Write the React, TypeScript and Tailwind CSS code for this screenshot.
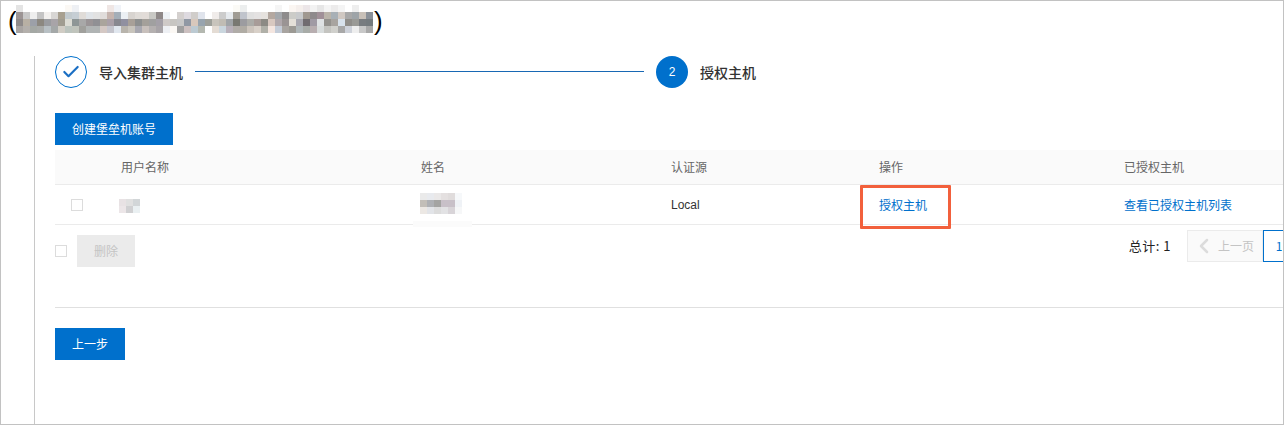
import { Check, ChevronLeft } from "lucide-react";

const FONT = "font-['Microsoft_YaHei','Noto_Sans_CJK_SC','Liberation_Sans',sans-serif]";

// mosaic cells of the blurred title, one string per row, w = white
const TITLE_ROWS = [
  "e4e4e4 w w w w w w fbf8f4 eef0f4 w w w w efe6e4 f0f3f8 w w w w w w w w w w w w w w w w fbfaf6 eceeee w w w w f5f5f5 w fbf6f2 f5efec ece6e8 f2f2f2 e6e6e6 f4f4f4 ecebeb f4f4f4 w eeeeee w",
  "9c9494 c8c8c8 eeeeee c4c4c4 f2f0ee d8d6d4 a8a090 c2cace c6ced4 e0dcd8 e0e4e8 e2e2e2 e0dcda c6b4ae a4aeb8 ecf0f4 d8d4d0 e0dcd8 e2dcd8 c8c8c4 8e8888 eef2f6 w d4d0ce dedae0 d0cdca e0e4ec w f0ecea cccccc e6eaee a09c94 c0c4cc e0e0e0 e4e2e2 e6e2de b4a8a0 a4a8ac 8e8c8c ccccc8 c8cacc a09890 8e8a8c a09098 bab4aa a8b0b6 d0c8c2 a8a8a8 9ea4a8 c8c0b8 8a9098",
  "8e8a8a b8b0a4 9ca0a8 8c8880 9a9ca0 a8a4a8 a09c90 dcdcd4 8e9696 a8a8a8 9a9496 909094 aaa49c aaa0a8 888890 9090a0 a8a098 8e9090 a4a09a a0a0a0 a4a0a8 cfcac8 c8c6c2 c8c8c8 9098a4 d8c8bc 98a4ae 9ea09a c8c4bc c0bcb4 a0a4a8 787872 9c9ca0 acaca8 a89c98 8c8a84 d8c8c0 b0a8ac 9a9494 e4e0d8 a8a8b0 706c70 a09aa4 dfe2e4 94928e a8a4a0 d8e2ec 908e8a 9a9a96 787c80 747a7e",
  "a8a4a2 b4b0ac a4a8a4 a8aaa8 b8c0c4 a4a8a8 d0ccc4 bcc4be c0c4bc a0a09c b0b4b4 b0b4b4 d4c8c4 c4c4cc e0e6ee b8b4ac c8c4bc a8a8b0 c8c0bc b4b0b0 a8a4a8 eef0f4 fbf8f4 a0a0a0 ccc0c0 bccad2 b4b8b0 w e4dcd4 cad6de b8b0ba b0aca8 b0aca4 ccc4bc d8d0c8 b0b0a8 f4e6e0 c4ccd8 a8a4a0 9c9a94 b0b8ba a8aca8 b8aeb0 d8dcdc c4c4c0 d0d0cc a8a8a8 ced2da eeeeee c8c8c8 a8a8a8",
];

const NAME_ROWS = [
  "e8e2e4 e0e0e0 d2d6d8",
  "ece6e8 d0d0d2 eaf0f2",
];

const FULLNAME_ROWS = [
  "eaeaea e8eaee eae8e8 e4e0e0 e0dcdc f6f8fa",
  "c2beb8 aeb0b4 a4a4a2 c8c0c8 c8c0c8 eff2f6",
  "ece8e4 e2e4e8 dcdcdc e2e2e4 d8d4d8 f6f7f8",
];

function Mosaic({ rows, className }: { rows: string[]; className?: string }) {
  const cells = rows.map((r) => r.split(" "));
  const cols = Math.max(...cells.map((r) => r.length));
  return (
    <svg className={className} width={cols * 7} height={rows.length * 7}>
      {cells.map((row, y) =>
        row.map((c, x) =>
          c === "w" ? null : <rect key={`${x}-${y}`} x={x * 7} y={y * 7} width="7" height="7" fill={`#${c}`} />
        )
      )}
    </svg>
  );
}

function Checkbox({ className }: { className?: string }) {
  return <span className={`block h-3 w-3 shrink-0 border border-[#dcdcdc] bg-white ${className ?? ""}`} />;
}

const GRID = "grid grid-cols-[66px_300px_250px_208px_245px_1fr] items-center";

export default function App() {
  return (
    <div className={`flex h-[425px] w-[1284px] flex-col overflow-hidden border border-[#c2c2c2] bg-white text-xs text-[#333] ${FONT}`}>
      {/* Title */}
      <div className="flex h-[55px] shrink-0 items-start pl-[7px] pt-1 text-[26px] leading-[33px] font-['Liberation_Sans',sans-serif] text-black">
        <span className="w-2">(</span>
        <Mosaic rows={TITLE_ROWS} />
        <span className="ml-px">)</span>
      </div>

      <div className="ml-[33px] flex-1 border-l border-[#c8c8c8] pl-5">
        {/* Steps */}
        <div className="flex h-8 items-center">
          <span className="flex h-8 w-8 shrink-0 items-center justify-center rounded-full border border-[#0070cc]">
            <Check size={20} strokeWidth={2.6} className="text-[#1b6fc4]" />
          </span>
          <span className="ml-3 text-sm font-medium text-[#333]">导入集群主机</span>
          <span className="mx-3 h-px w-[449px] -translate-y-px bg-[#1868b4]" />
          <span className="flex h-8 w-8 shrink-0 items-center justify-center rounded-full bg-[#0070cc] text-xs text-white font-['Liberation_Sans',sans-serif]">
            2
          </span>
          <span className="ml-3 text-sm font-medium text-[#333]">授权主机</span>
        </div>

        <button className="mt-[25px] block h-8 w-[118px] bg-[#0070cc] text-xs text-white">创建堡垒机账号</button>

        {/* Table */}
        <div className="relative mt-[5px]">
          <div className={`${GRID} h-[35px] border-b border-[#ebebeb] bg-[#fafafa] text-[#666]`}>
            <span />
            <span>用户名称</span>
            <span>姓名</span>
            <span>认证源</span>
            <span>操作</span>
            <span>已授权主机</span>
          </div>
          <div className={`${GRID} h-10 border-b border-[#ebebeb]`}>
            <span className="pl-4">
              <Checkbox />
            </span>
            <span className="-ml-0.5 flex">
              <Mosaic rows={NAME_ROWS} className="mt-0.5" />
            </span>
            <span className="-ml-px flex">
              <Mosaic rows={FULLNAME_ROWS} className="mb-0.5" />
            </span>
            <span className="font-['Liberation_Sans',sans-serif]">Local</span>
            <a className="text-[#0070cc]">授权主机</a>
            <a className="text-[#0070cc]">查看已授权主机列表</a>
          </div>
          {/* leftover of the blur, sits over the row border */}
          <div className="absolute left-[358px] top-[71px] h-1.5 w-[59px] bg-[#fbfbfb]" />
          {/* red highlight */}
          <div className="absolute left-[805px] top-[35px] h-[44px] w-[91px] rounded-[1px] border-[3px] border-[#f2603c]" />
        </div>

        {/* Footer */}
        <div className="flex h-[82px] items-start justify-between">
          <div className="mt-2.5 flex items-center gap-2.5">
            <Checkbox />
            <button className="h-8 w-[58px] bg-[#ebebeb] text-xs text-[#c4c4c4]">删除</button>
          </div>
          <div className="mr-[-12px] mt-[5px] flex items-center">
            <span className="mr-4 text-[13px] tracking-[0.5px] text-[#222]">总计: 1</span>
            <span className="flex h-8 w-[76px] items-center border border-[#ebebeb] bg-[#fafafa] pl-1 text-[#c4c4c4]">
              <ChevronLeft size={24} strokeWidth={2.5} className="shrink-0 text-[#dcdcdc]" />
              <span className="ml-0.5">上一页</span>
            </span>
            <span className="flex h-8 w-8 items-center justify-center border border-[#0070cc] text-[#0070cc]">1</span>
          </div>
        </div>

        <div className="h-px bg-[#e0e0e0]" />

        <button className="mt-5 block h-8 w-[70px] bg-[#0070cc] text-xs text-white">上一步</button>
      </div>
    </div>
  );
}
